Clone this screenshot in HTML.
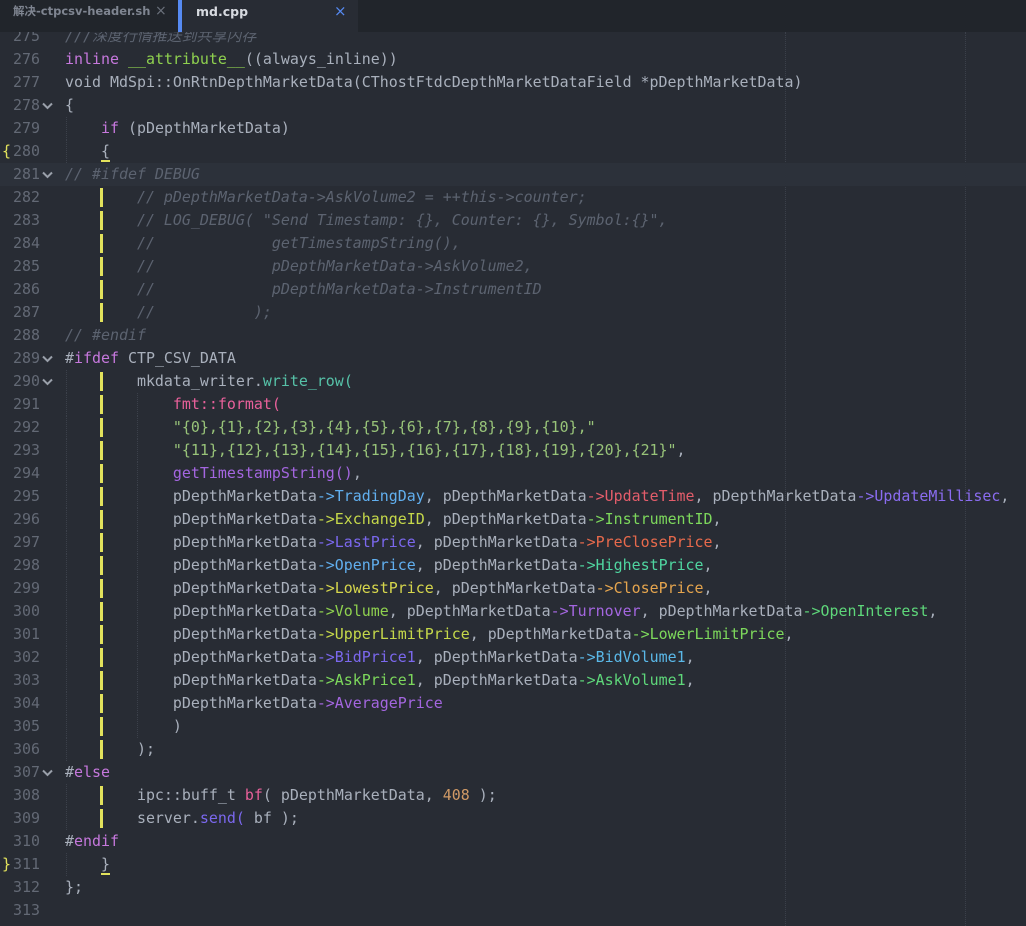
<!DOCTYPE html>
<html><head><meta charset="utf-8"><style>
*{margin:0;padding:0;box-sizing:border-box}
body{width:1026px;height:926px;overflow:hidden;background:#282c34;font-family:"DejaVu Sans Mono","Liberation Mono",monospace;font-size:14.95px;color:#a9b0bc;position:relative}
.tabs{position:absolute;left:0;top:0;width:1026px;height:32px;background:#21252b;z-index:5}
.tab1{position:absolute;left:0;top:0;width:178px;height:32px;background:#21252b;color:#7f8591;font:bold 11.5px "DejaVu Sans","Noto Sans CJK SC",sans-serif;line-height:23px;padding-left:13px;white-space:nowrap;overflow:hidden}
.tab1 .x{position:absolute;left:155px;top:0;color:#6a707b;font-weight:normal;font-size:14px}
.tab2{position:absolute;left:178px;top:0;width:180px;height:32px;background:#282c34;border-left:4px solid #568af2;color:#d7dae0;font:bold 12.5px "DejaVu Sans",sans-serif;line-height:23px;padding-left:14px}
.tab2 .x{position:absolute;left:152px;top:0;color:#568af2;font-weight:normal;font-size:15px}
.ed{position:absolute;left:0;top:37px;width:1026px;height:889px}
.l{position:absolute;left:0;height:23px;width:1026px;line-height:23px;white-space:pre}
.n{position:absolute;left:0;width:40px;text-align:right;color:#636975}
.f{position:absolute;left:42px;top:8px;width:11px;height:8px}
.c{position:absolute;left:65px;top:0}
.hl{background:#2c313a}
.y{position:absolute;left:100px;width:3px;height:19px;top:2px;background:#e2e25c}
.g{position:absolute;width:0;top:0;height:23px;border-left:1px dotted #3b404a}
.r{position:absolute;top:32px;height:894px;width:0;border-left:1px dotted #3b404a}
.cm{color:#5c6370;font-style:italic}
.k{color:#c678dd}.fn{color:#56c2a8}.gr{color:#8fd14f}.s{color:#98c379}.pk{color:#e8609a}
.bl{color:#61afef}.rd{color:#e45d6b}.pu{color:#8a6cf0}.yg{color:#c5d84a}.gn{color:#7dd85c}
.or{color:#e86a4c}.te{color:#4fd6a0}.ye{color:#d6d64c}.og{color:#e5a54e}.vi{color:#a466e0}
.lg{color:#5ed77a}.lb{color:#5ab8e8}.nu{color:#d19a66}.ik{color:#7b68ee}
</style></head><body>
<div class="tabs"><div class="tab1">解决-ctpcsv-header.sh<span class="x">×</span></div><div class="tab2">md.cpp<span class="x">×</span></div></div>
<div class="r" style="left:785px"></div><div class="r" style="left:965px"></div>
<div class="ed">
<div class="l" style="top:-12px"><span class="n">275</span><span class="c cm">///深度行情推送到共享内存</span></div>
<div class="l" style="top:11px"><span class="n">276</span><span class="c"><span class="k">inline</span> <span class="gr">__attribute__</span>((always_inline))</span></div>
<div class="l" style="top:34px"><span class="n">277</span><span class="c">void MdSpi::OnRtnDepthMarketData(CThostFtdcDepthMarketDataField *pDepthMarketData)</span></div>
<div class="l" style="top:57px"><span class="n">278</span><svg class="f" viewBox="0 0 11 8"><path d="M1 1.5L5.5 6L10 1.5" stroke="#9aa0aa" stroke-width="2" fill="none"/></svg><span class="c">{</span></div>
<div class="l" style="top:80px"><span class="g" style="left:66px"></span><span class="n">279</span><span class="c">    <span class="k">if</span> (pDepthMarketData)</span></div>
<div class="l" style="top:103px"><span class="g" style="left:66px"></span><span style="position:absolute;left:2px;color:#e2e25c">{</span><span class="n">280</span><span class="c">    <span style="border-bottom:2px solid #e2e25c">{</span></span></div>
<div class="l hl" style="top:126px"><span class="n">281</span><svg class="f" viewBox="0 0 11 8"><path d="M1 1.5L5.5 6L10 1.5" stroke="#9aa0aa" stroke-width="2" fill="none"/></svg><span class="c cm">// #ifdef DEBUG</span></div>
<div class="l" style="top:149px"><span class="y"></span><span class="n">282</span><span class="c cm">        // pDepthMarketData->AskVolume2 = ++this->counter;</span></div>
<div class="l" style="top:172px"><span class="y"></span><span class="n">283</span><span class="c cm">        // LOG_DEBUG( "Send Timestamp: {}, Counter: {}, Symbol:{}",</span></div>
<div class="l" style="top:195px"><span class="y"></span><span class="n">284</span><span class="c cm">        //             getTimestampString(),</span></div>
<div class="l" style="top:218px"><span class="y"></span><span class="n">285</span><span class="c cm">        //             pDepthMarketData->AskVolume2,</span></div>
<div class="l" style="top:241px"><span class="y"></span><span class="n">286</span><span class="c cm">        //             pDepthMarketData->InstrumentID</span></div>
<div class="l" style="top:264px"><span class="y"></span><span class="n">287</span><span class="c cm">        //           );</span></div>
<div class="l" style="top:287px"><span class="n">288</span><span class="c cm">// #endif</span></div>
<div class="l" style="top:310px"><span class="n">289</span><svg class="f" viewBox="0 0 11 8"><path d="M1 1.5L5.5 6L10 1.5" stroke="#9aa0aa" stroke-width="2" fill="none"/></svg><span class="c">#<span class="k">ifdef</span> CTP_CSV_DATA</span></div>
<div class="l" style="top:333px"><span class="g" style="left:66px"></span><span class="y"></span><span class="n">290</span><svg class="f" viewBox="0 0 11 8"><path d="M1 1.5L5.5 6L10 1.5" stroke="#9aa0aa" stroke-width="2" fill="none"/></svg><span class="c">        mkdata_writer.<span class="fn">write_row</span><span class="fn">(</span></span></div>
<div class="l" style="top:356px"><span class="g" style="left:66px"></span><span class="g" style="left:137px"></span><span class="y"></span><span class="n">291</span><span class="c">            <span class="pk">fmt::format</span><span class="pk">(</span></span></div>
<div class="l" style="top:379px"><span class="g" style="left:66px"></span><span class="g" style="left:137px"></span><span class="y"></span><span class="n">292</span><span class="c">            <span class="s">"{0},{1},{2},{3},{4},{5},{6},{7},{8},{9},{10},"</span></span></div>
<div class="l" style="top:402px"><span class="g" style="left:66px"></span><span class="g" style="left:137px"></span><span class="y"></span><span class="n">293</span><span class="c">            <span class="s">"{11},{12},{13},{14},{15},{16},{17},{18},{19},{20},{21}"</span>,</span></div>
<div class="l" style="top:425px"><span class="g" style="left:66px"></span><span class="g" style="left:137px"></span><span class="y"></span><span class="n">294</span><span class="c">            <span class="vi">getTimestampString</span><span class="vi">()</span>,</span></div>
<div class="l" style="top:448px"><span class="g" style="left:66px"></span><span class="g" style="left:137px"></span><span class="y"></span><span class="n">295</span><span class="c">            pDepthMarketData<span class="bl">-&gt;TradingDay</span>, pDepthMarketData<span class="rd">-&gt;UpdateTime</span>, pDepthMarketData<span class="pu">-&gt;UpdateMillisec</span>,</span></div>
<div class="l" style="top:471px"><span class="g" style="left:66px"></span><span class="g" style="left:137px"></span><span class="y"></span><span class="n">296</span><span class="c">            pDepthMarketData<span class="yg">-&gt;ExchangeID</span>, pDepthMarketData<span class="gn">-&gt;InstrumentID</span>,</span></div>
<div class="l" style="top:494px"><span class="g" style="left:66px"></span><span class="g" style="left:137px"></span><span class="y"></span><span class="n">297</span><span class="c">            pDepthMarketData<span class="ik">-&gt;LastPrice</span>, pDepthMarketData<span class="or">-&gt;PreClosePrice</span>,</span></div>
<div class="l" style="top:517px"><span class="g" style="left:66px"></span><span class="g" style="left:137px"></span><span class="y"></span><span class="n">298</span><span class="c">            pDepthMarketData<span class="bl">-&gt;OpenPrice</span>, pDepthMarketData<span class="te">-&gt;HighestPrice</span>,</span></div>
<div class="l" style="top:540px"><span class="g" style="left:66px"></span><span class="g" style="left:137px"></span><span class="y"></span><span class="n">299</span><span class="c">            pDepthMarketData<span class="ye">-&gt;LowestPrice</span>, pDepthMarketData<span class="og">-&gt;ClosePrice</span>,</span></div>
<div class="l" style="top:563px"><span class="g" style="left:66px"></span><span class="g" style="left:137px"></span><span class="y"></span><span class="n">300</span><span class="c">            pDepthMarketData<span class="gr">-&gt;Volume</span>, pDepthMarketData<span class="vi">-&gt;Turnover</span>, pDepthMarketData<span class="lg">-&gt;OpenInterest</span>,</span></div>
<div class="l" style="top:586px"><span class="g" style="left:66px"></span><span class="g" style="left:137px"></span><span class="y"></span><span class="n">301</span><span class="c">            pDepthMarketData<span class="yg">-&gt;UpperLimitPrice</span>, pDepthMarketData<span class="gn">-&gt;LowerLimitPrice</span>,</span></div>
<div class="l" style="top:609px"><span class="g" style="left:66px"></span><span class="g" style="left:137px"></span><span class="y"></span><span class="n">302</span><span class="c">            pDepthMarketData<span class="ik">-&gt;BidPrice1</span>, pDepthMarketData<span class="lb">-&gt;BidVolume1</span>,</span></div>
<div class="l" style="top:632px"><span class="g" style="left:66px"></span><span class="g" style="left:137px"></span><span class="y"></span><span class="n">303</span><span class="c">            pDepthMarketData<span class="gn">-&gt;AskPrice1</span>, pDepthMarketData<span class="lg">-&gt;AskVolume1</span>,</span></div>
<div class="l" style="top:655px"><span class="g" style="left:66px"></span><span class="g" style="left:137px"></span><span class="y"></span><span class="n">304</span><span class="c">            pDepthMarketData<span class="vi">-&gt;AveragePrice</span></span></div>
<div class="l" style="top:678px"><span class="g" style="left:66px"></span><span class="g" style="left:137px"></span><span class="y"></span><span class="n">305</span><span class="c">            )</span></div>
<div class="l" style="top:701px"><span class="g" style="left:66px"></span><span class="y"></span><span class="n">306</span><span class="c">        );</span></div>
<div class="l" style="top:724px"><span class="n">307</span><svg class="f" viewBox="0 0 11 8"><path d="M1 1.5L5.5 6L10 1.5" stroke="#9aa0aa" stroke-width="2" fill="none"/></svg><span class="c">#<span class="k">else</span></span></div>
<div class="l" style="top:747px"><span class="g" style="left:66px"></span><span class="y"></span><span class="n">308</span><span class="c">        ipc::buff_t <span class="pk">bf</span>( pDepthMarketData, <span class="nu">408</span> );</span></div>
<div class="l" style="top:770px"><span class="g" style="left:66px"></span><span class="y"></span><span class="n">309</span><span class="c">        server.<span class="ik">send</span><span class="ik">(</span> bf );</span></div>
<div class="l" style="top:793px"><span class="n">310</span><span class="c">#<span class="k">endif</span></span></div>
<div class="l" style="top:816px"><span class="g" style="left:66px"></span><span style="position:absolute;left:2px;color:#e2e25c">}</span><span class="n">311</span><span class="c">    <span style="border-bottom:2px solid #e2e25c">}</span></span></div>
<div class="l" style="top:839px"><span class="n">312</span><span class="c">};</span></div>
<div class="l" style="top:862px"><span class="n">313</span></div>
</div>
</body></html>
